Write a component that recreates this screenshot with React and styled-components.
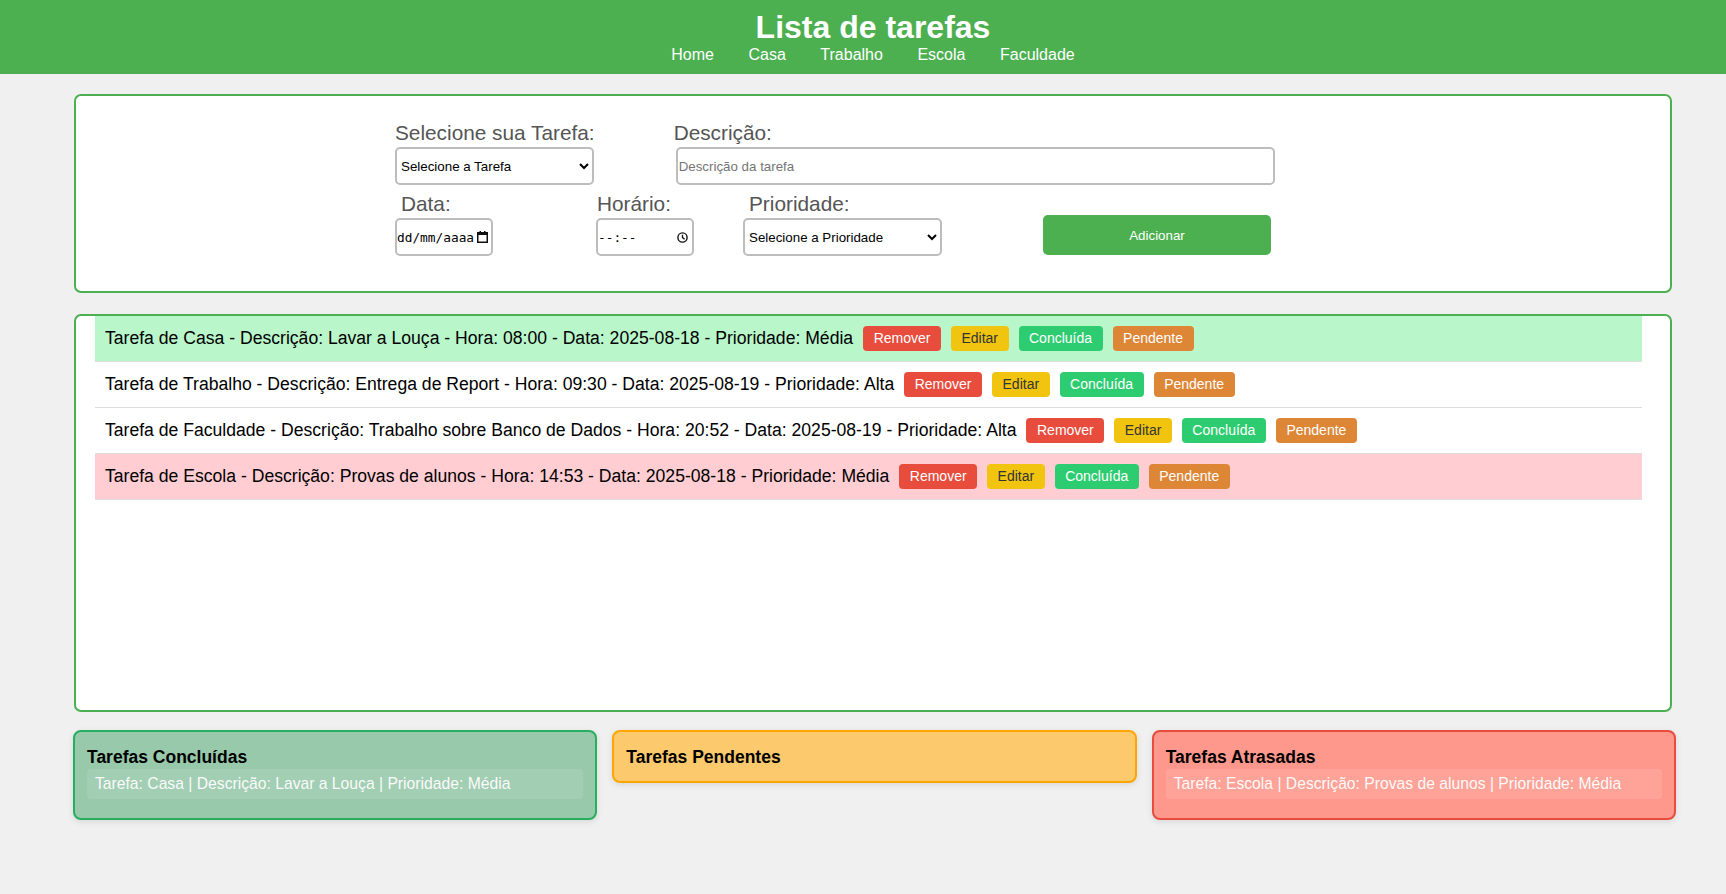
import React from "react";
import styled, { createGlobalStyle } from "styled-components";

const Global = createGlobalStyle`
  html, body { margin: 0; padding: 0; background: #f0f0f0; }
  body { font-family: "Liberation Sans", Arial, sans-serif; color: #000; }
  * { box-sizing: border-box; }
`;

const Header = styled.header`
  background: #4caf50;
  color: #fff;
  padding: 9px 0 9px 20px;
  text-align: center;
  height: 74px;
`;

const Title = styled.h1`
  margin: 0;
  font-size: 32px;
  line-height: 37px;
  font-weight: bold;
`;

const Nav = styled.nav`
  display: flex;
  justify-content: center;
  gap: 34.5px;
  font-size: 16px;
  line-height: 18px;
`;

const NavLink = styled.a`
  color: #fff;
  text-decoration: none;
`;

const Main = styled.main`
  display: flex;
  flex-direction: column;
  align-items: flex-start;
  padding: 20px 0 60px 74px;
`;

const FormCard = styled.section`
  width: 1598px;
  height: 199px;
  background: #fff;
  border: 2px solid #4caf50;
  border-radius: 7px;
  padding: 25px 0 0 319px;
`;

const FormRow = styled.div`
  display: flex;
  align-items: flex-end;
  margin-bottom: ${(p) => p.$mb || 0}px;
`;

const Field = styled.div`
  display: flex;
  flex-direction: column;
  margin-left: ${(p) => p.$ml || 0}px;
`;

const Label = styled.label`
  display: block;
  font-size: 20.8px;
  line-height: 24px;
  color: #555;
  margin: 0 0 2px ${(p) => p.$indent || 0}px;
  white-space: nowrap;
`;

const Select = styled.select`
  width: ${(p) => p.$w}px;
  height: 38px;
  border: 2px solid #bdbdbd;
  border-radius: 5px;
  background: #fff;
  font-family: "Liberation Sans", Arial, sans-serif;
  font-size: 13.33px;
  color: #000;
  padding: 0;
`;

const TextInput = styled.input`
  width: ${(p) => p.$w}px;
  height: 38px;
  margin-left: ${(p) => p.$ml || 0}px;
  border: 2px solid #bdbdbd;
  border-radius: 5px;
  padding: 0 1px;
  font-family: "Liberation Sans", Arial, sans-serif;
  font-size: 13.33px;
  &::placeholder { color: #757575; }
`;

const PickerBox = styled.div`
  width: ${(p) => p.$w}px;
  height: 38px;
  border: 2px solid #bdbdbd;
  border-radius: 5px;
  background: #fff;
  display: flex;
  align-items: center;
  padding: 0 ${(p) => p.$pr}px 0 0;
`;

const PickerText = styled.input`
  flex: 1;
  min-width: 0;
  border: none;
  outline: none;
  background: transparent;
  padding: 0;
  font-family: "DejaVu Sans Mono", "Liberation Mono", monospace;
  font-size: 12.8px;
  color: #000;
`;

const AddButton = styled.button`
  width: 228px;
  height: 40px;
  margin: 0 0 1px ${(p) => p.$ml}px;
  background: #4caf50;
  color: #fff;
  border: none;
  border-radius: 5px;
  font-family: "Liberation Sans", Arial, sans-serif;
  font-size: 13.33px;
`;

const ListCard = styled.section`
  width: 1598px;
  height: 398px;
  margin-top: 21px;
  background: #fff;
  border: 2px solid #4caf50;
  border-radius: 7px;
  padding: 0 28px 0 19px;
`;

const TaskList = styled.ul`
  list-style: none;
  margin: 0;
  padding: 0;
`;

const rowBg = { done: "#b9f6ca", late: "#ffcdd2", normal: "#fff" };

const TaskRow = styled.li`
  display: flex;
  align-items: center;
  padding: 10px;
  border-bottom: 1px solid #ddd;
  background: ${(p) => rowBg[p.$status]};
  font-size: 17.6px;
  white-space: nowrap;
`;

const btnColors = {
  remove: ["#e74c3c", "#fff"],
  edit: ["#f1c40f", "#333"],
  done: ["#2ecc71", "#fff"],
  pending: ["#dd8636", "#fff"],
};

const ActionButton = styled.button`
  margin-left: 10px;
  padding: 4px 10.5px;
  border: none;
  border-radius: 4px;
  font-family: "Liberation Sans", Arial, sans-serif;
  font-size: 14px;
  line-height: 17px;
  background: ${(p) => btnColors[p.$kind][0]};
  color: ${(p) => btnColors[p.$kind][1]};
`;

const Summary = styled.div`
  display: grid;
  grid-template-columns: repeat(3, 1fr);
  gap: 15px;
  align-items: start;
  width: 1603px;
  margin: 18px 0 0 -1px;
`;

const boxTheme = {
  done: ["#98c9ab", "#27ae60"],
  pending: ["#fcc96c", "#ffa500"],
  late: ["#ff988c", "#e74c3c"],
};

const SummaryBox = styled.div`
  background: ${(p) => boxTheme[p.$kind][0]};
  border: 2px solid ${(p) => boxTheme[p.$kind][1]};
  border-radius: 8px;
  padding: 15px 12px 14px;
  box-shadow: 0 2px 6px rgba(0, 0, 0, 0.1);
`;

const SummaryTitle = styled.h3`
  margin: 0;
  font-size: 17.5px;
  line-height: 20px;
  font-weight: bold;
  color: #000;
`;

const SummaryItem = styled.div`
  margin: 2px 0 5px;
  padding: 6px 8px;
  border-radius: 4px;
  background: rgba(255, 255, 255, 0.1);
  color: #fafafa;
  font-size: 15.7px;
  line-height: 18px;
`;

const CalendarIcon = () => (
  <svg width="11" height="12" viewBox="0 0 11 12">
    <rect x="0.75" y="1.75" width="9.5" height="9.5" fill="none" stroke="#111" strokeWidth="1.5" />
    <rect x="0" y="1" width="11" height="3" fill="#111" />
    <rect x="2.5" y="0" width="1.5" height="2" fill="#111" />
    <rect x="7" y="0" width="1.5" height="2" fill="#111" />
  </svg>
);

const ClockIcon = () => (
  <svg width="11" height="11" viewBox="0 0 11 11">
    <circle cx="5.5" cy="5.5" r="4.6" fill="none" stroke="#111" strokeWidth="1.4" />
    <path d="M5.5 2.8 V5.6 L7.6 7.2" fill="none" stroke="#111" strokeWidth="1.3" />
  </svg>
);

const tasks = [
  { text: "Tarefa de Casa - Descrição: Lavar a Louça - Hora: 08:00 - Data: 2025-08-18 - Prioridade: Média", status: "done" },
  { text: "Tarefa de Trabalho - Descrição: Entrega de Report - Hora: 09:30 - Data: 2025-08-19 - Prioridade: Alta", status: "normal" },
  { text: "Tarefa de Faculdade - Descrição: Trabalho sobre Banco de Dados - Hora: 20:52 - Data: 2025-08-19 - Prioridade: Alta", status: "normal" },
  { text: "Tarefa de Escola - Descrição: Provas de alunos - Hora: 14:53 - Data: 2025-08-18 - Prioridade: Média", status: "late" },
];

export default function App() {
  return (
    <>
      <Global />
      <Header>
        <Title>Lista de tarefas</Title>
        <Nav>
          {["Home", "Casa", "Trabalho", "Escola", "Faculdade"].map((n) => (
            <NavLink key={n} href="#">{n}</NavLink>
          ))}
        </Nav>
      </Header>
      <Main>
        <FormCard>
          <FormRow $mb={7}>
            <Field>
              <Label>Selecione sua Tarefa:</Label>
              <Select $w={199} defaultValue="">
                <option value="">Selecione a Tarefa</option>
                <option>Casa</option>
                <option>Trabalho</option>
                <option>Escola</option>
                <option>Faculdade</option>
              </Select>
            </Field>
            <Field $ml={79}>
              <Label>Descrição:</Label>
              <TextInput $w={599} $ml={2} placeholder="Descrição da tarefa" />
            </Field>
          </FormRow>
          <FormRow>
            <Field>
              <Label $indent={6}>Data:</Label>
              <PickerBox $w={98} $pr={3}>
                <PickerText readOnly value="dd/mm/aaaa" />
                <CalendarIcon />
              </PickerBox>
            </Field>
            <Field $ml={103}>
              <Label $indent={1}>Horário:</Label>
              <PickerBox $w={98} $pr={4}>
                <PickerText readOnly value="--:--" />
                <ClockIcon />
              </PickerBox>
            </Field>
            <Field $ml={49}>
              <Label $indent={6}>Prioridade:</Label>
              <Select $w={199} defaultValue="">
                <option value="">Selecione a Prioridade</option>
                <option>Alta</option>
                <option>Média</option>
                <option>Baixa</option>
              </Select>
            </Field>
            <AddButton $ml={101}>Adicionar</AddButton>
          </FormRow>
        </FormCard>

        <ListCard>
          <TaskList>
            {tasks.map((t) => (
              <TaskRow key={t.text} $status={t.status}>
                <span>{t.text}</span>
                <ActionButton $kind="remove">Remover</ActionButton>
                <ActionButton $kind="edit">Editar</ActionButton>
                <ActionButton $kind="done">Concluída</ActionButton>
                <ActionButton $kind="pending">Pendente</ActionButton>
              </TaskRow>
            ))}
          </TaskList>
        </ListCard>

        <Summary>
          <SummaryBox $kind="done">
            <SummaryTitle>Tarefas Concluídas</SummaryTitle>
            <SummaryItem>Tarefa: Casa | Descrição: Lavar a Louça | Prioridade: Média</SummaryItem>
          </SummaryBox>
          <SummaryBox $kind="pending">
            <SummaryTitle>Tarefas Pendentes</SummaryTitle>
          </SummaryBox>
          <SummaryBox $kind="late">
            <SummaryTitle>Tarefas Atrasadas</SummaryTitle>
            <SummaryItem>Tarefa: Escola | Descrição: Provas de alunos | Prioridade: Média</SummaryItem>
          </SummaryBox>
        </Summary>
      </Main>
    </>
  );
}
